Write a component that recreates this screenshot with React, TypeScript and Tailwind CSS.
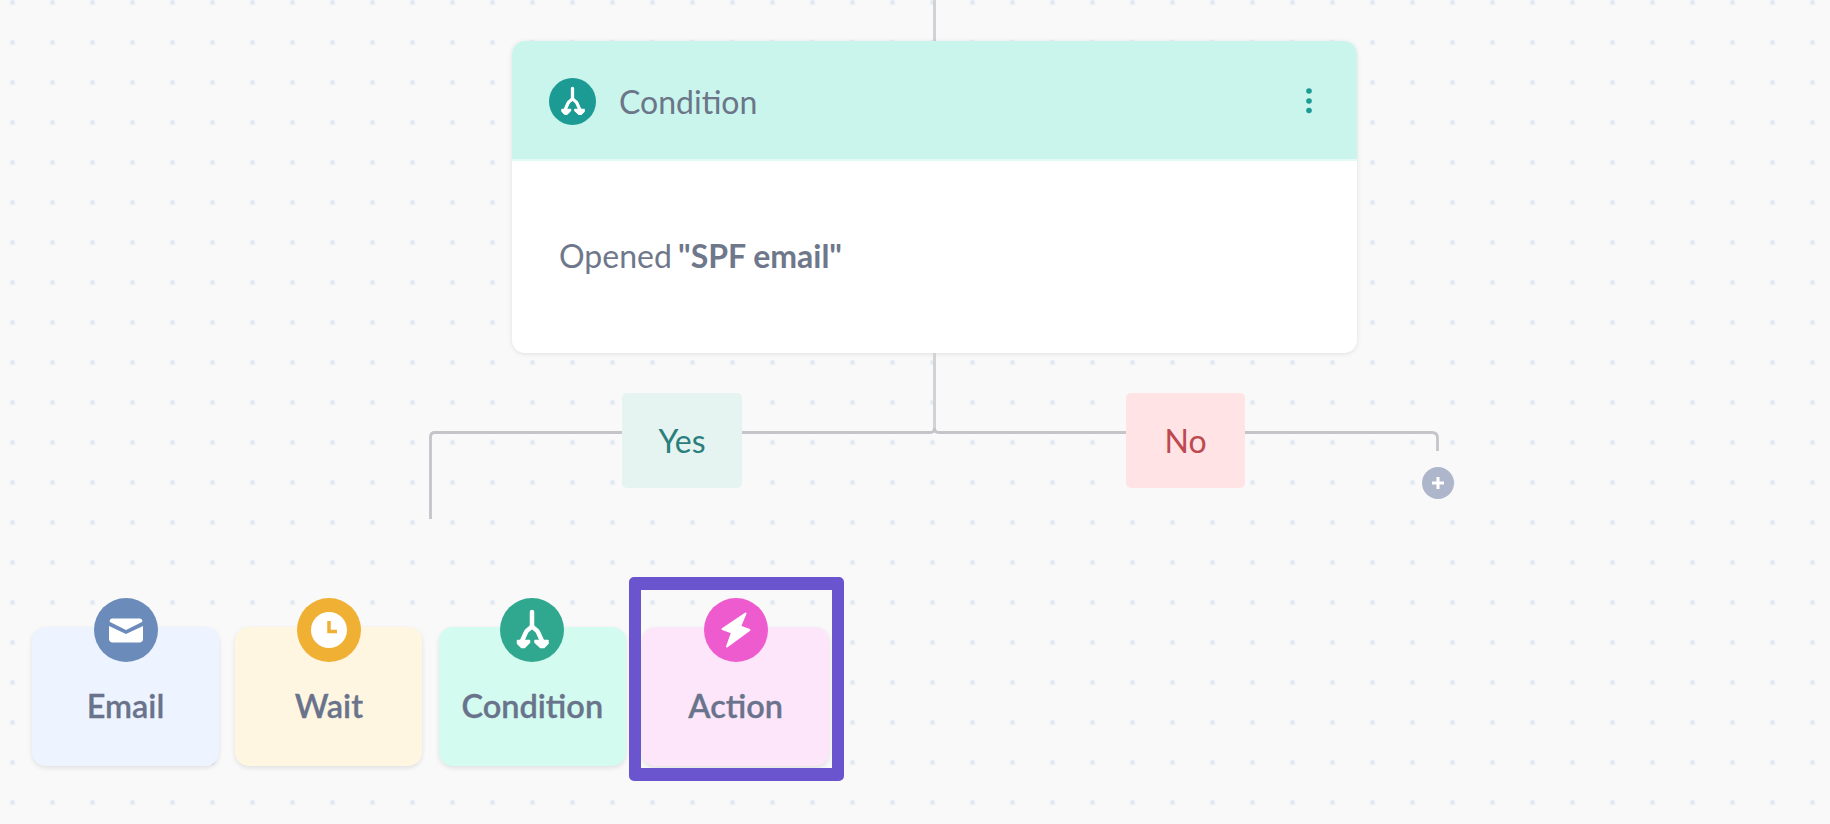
import React from "react";

function BranchIcon({ size, className }: { size: number; className?: string }) {
  return (
    <svg width={size} height={size} viewBox="0 0 64 64" className={className}>
      <path d="M32 14V27C32 30 28 31 26 34L22 43M32 27C32 30 36 31 38 34L42 43" fill="none" stroke="#fff" strokeWidth="4.500" strokeLinecap="round" />
      <path d="M17.500 42.500H29.500V44.500L24.500 49.500H21.500L17.500 45.500Z" fill="#fff" stroke="#fff" strokeWidth="1.500" strokeLinejoin="round" />
      <path d="M35 42.500H48V45.500L44 49.500H40.500L35 44.500Z" fill="#fff" stroke="#fff" strokeWidth="1.500" strokeLinejoin="round" />
    </svg>
  );
}

function MailIcon() {
  return (
    <svg width="64" height="64" viewBox="0 0 64 64">
      <path d="M19 20.500C15.500 20.500 15.300 23 16 24L32 32L48 24C48.700 23 48.500 20.500 45 20.500Z" fill="#fff" />
      <path d="M15 28V41C15 43 16.500 44.500 18.500 44.500H45.500C47.500 44.500 49 43 49 41V28L32 36Z" fill="#fff" />
    </svg>
  );
}

function ClockIcon() {
  return (
    <svg width="64" height="64" viewBox="0 0 64 64">
      <circle cx="32" cy="32" r="18" fill="#fff" />
      <path d="M32 23V33.500H40" fill="none" stroke="#efb034" strokeWidth="3.500" />
    </svg>
  );
}

function BoltIcon() {
  return (
    <svg width="64" height="64" viewBox="0 0 64 64">
      <path d="M41.500 15.500L18.500 31L28 34.500L23 48.500L45.500 32L36 28.500Z" fill="#fff" stroke="#fff" strokeWidth="2" strokeLinejoin="round" />
    </svg>
  );
}

function ToolCard({ label, bg, circle, icon, children }: { label: string; bg: string; circle: string; icon: React.ReactNode; children?: React.ReactNode }) {
  return (
    <div className={`relative w-[187px] h-[139.500px] rounded-[14px] pt-[59px] text-center text-[32.500px] leading-[40px] font-semibold [-webkit-text-stroke:0.3px_#69738b] text-[#69738b] shadow-[0_2px_5px_rgba(0,0,0,0.1)] ${bg}`}>
      <div className={`absolute top-[-28.500px] left-1/2 -translate-x-1/2 w-[64px] h-[64px] rounded-full ${circle}`}>{icon}</div>
      {label}
      {children}
    </div>
  );
}

export default function App() {
  return (
    <div className="relative w-[1830px] h-[824px] overflow-hidden bg-[#f9f9fa] bg-[radial-gradient(circle,#e1e8f3_2px,#f0f3f8_2.5px,transparent_3.2px)] bg-[size:40px_40px] bg-[position:-7.5px_-17.500px] font-['Lato','Liberation_Sans',sans-serif]">
      <div className="ml-[933px] w-[3px] h-[41px] bg-[#d2d2d6]" />

      <div className="ml-[511.500px] w-[845.500px] h-[312px] rounded-[13px] bg-white overflow-hidden shadow-[0_1px_5px_rgba(0,0,0,0.1)]">
        <div className="flex items-center h-[120px] bg-[#caf5ec] border-b-[2px] border-[#e4faf5] pt-[2px] pl-[37.500px] pr-[44px]">
          <div className="flex items-center justify-center w-[47px] h-[47px] rounded-full bg-[#1c9a94]">
            <BranchIcon size={47} />
          </div>
          <span className="ml-[23px] mt-[2px] text-[32px] text-[#6b7689]">Condition</span>
          <svg width="8" height="28" viewBox="0 0 8 28" className="ml-auto">
            <circle cx="4" cy="4" r="2.800" fill="#1c9a94" />
            <circle cx="4" cy="14" r="2.800" fill="#1c9a94" />
            <circle cx="4" cy="23.500" r="2.800" fill="#1c9a94" />
          </svg>
        </div>
        <div className="flex items-center h-[190px] pl-[47.500px] text-[32px] text-[#6f788b]">
          <span>
            Opened <b className="font-bold ml-[-2px]">"SPF email"</b>
          </span>
        </div>
      </div>

      <div className="relative h-[273.500px]">
        <svg width="1830" height="274" viewBox="0 0 1830 274" className="absolute inset-0" fill="none">
          <path d="M934.500 0V75" stroke="#d2d2d6" strokeWidth="3" />
          <path d="M934.500 75Q934.500 79.500 930 79.500H435Q430.500 79.500 430.500 84V166" stroke="#c4c4c9" strokeWidth="2.800" />
          <path d="M934.500 75Q934.500 79.500 939 79.500H1432Q1437.500 79.500 1437.500 85V98" stroke="#c4c4c9" strokeWidth="2.800" />
        </svg>
        <div className="absolute left-[622px] top-[40px] flex items-center justify-center w-[120px] h-[95px] rounded-[5px] bg-[#e6f4f1] text-[32px] text-[#2a7f7d]">Yes</div>
        <div className="absolute left-[1126px] top-[40px] flex items-center justify-center w-[119px] h-[95px] rounded-[5px] bg-[#ffe3e5] text-[32px] text-[#bd4a4f]">No</div>
        <div className="absolute left-[1421.500px] top-[114px] flex items-center justify-center w-[32px] h-[32px] rounded-full bg-[#adb6cb]">
          <svg width="14" height="14" viewBox="0 0 14 14">
            <path d="M7 1V13M1 7H13" stroke="#fff" strokeWidth="3" />
          </svg>
        </div>
      </div>

      <div className="flex gap-[16.400px] pl-[32px]">
        <ToolCard label="Email" bg="bg-[#edf4ff]" circle="bg-[#6b8cba]" icon={<MailIcon />} />
        <ToolCard label="Wait" bg="bg-[#fff6e2]" circle="bg-[#efb034]" icon={<ClockIcon />} />
        <ToolCard label="Condition" bg="bg-[#d3fbf0]" circle="bg-[#2fa88f]" icon={<BranchIcon size={64} />} />
        <ToolCard label="Action" bg="bg-[#fde6fa]" circle="bg-[#ee5bcf]" icon={<BoltIcon />}>
          <div className="absolute left-[-13px] top-[-49.500px] w-[215px] h-[204px] border-x-[12px] border-y-[13px] border-[#6a55cf] rounded-[5px]" />
        </ToolCard>
      </div>
    </div>
  );
}
